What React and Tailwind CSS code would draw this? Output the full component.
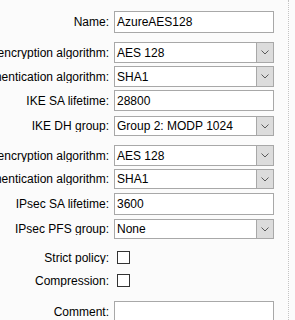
import React from "react";

const font = { fontFamily: '"Liberation Sans", Arial, sans-serif' };

function Label({ children }) {
  return (
    <div className="w-[110px] flex justify-end overflow-hidden pr-[1px]">
      <span className="shrink-0 whitespace-nowrap text-[12px] text-black leading-none">{children}</span>
    </div>
  );
}

function Input({ value, h = "h-[22px]" }) {
  return (
    <div className={`w-[160px] ${h} bg-white border border-[#a8a8a8] flex items-center pl-[2px] text-[12px] text-black`}>
      {value}
    </div>
  );
}

function Select({ value, h = "h-[21px]" }) {
  return (
    <div className={`w-[160px] ${h} bg-white border border-[#a8a8a8] flex items-stretch text-[12px] text-black`}>
      <div className="flex-1 flex items-center pl-[2px]">{value}</div>
      <div className="w-[17px] bg-[#dcdcdc] border-l border-[#a8a8a8] flex items-center justify-center">
        <svg width="8" height="5" viewBox="0 0 8 5">
          <path d="M0.5 0.5 L4 4 L7.5 0.5" fill="none" stroke="#5a5a5a" strokeWidth="1" />
        </svg>
      </div>
    </div>
  );
}

function Row({ label, children, mt }) {
  return (
    <div className={`flex items-center gap-x-[4px] ${mt}`}>
      <Label>{label}</Label>
      {children}
    </div>
  );
}

function Sep({ mt }) {
  return <div className={`w-[280px] h-px bg-[#a0a0a0] ${mt}`} />;
}

function Check({ label, mt }) {
  return (
    <div className={`flex items-center gap-x-[7px] ${mt}`}>
      <Label>{label}</Label>
      <div className="w-[13px] h-[13px] bg-white border border-[#333333]" />
    </div>
  );
}

export default function App() {
  return (
    <div className="w-[295px] h-[320px] overflow-hidden bg-[#fbfbfb] flex" style={font}>
      <div className="w-[288px] shrink-0 flex flex-col">
        <div className="h-[2px] w-full bg-[#f28c00]" />
        <Row label="Name:" mt="mt-[11px]">
          <Input value="AzureAES128" />
        </Row>
        <Sep mt="mt-[4px]" />
        <Row label="IKE encryption algorithm:" mt="mt-[5px]">
          <Select value="AES 128" />
        </Row>
        <Row label="IKE authentication algorithm:" mt="mt-[3px]">
          <Select value="SHA1" />
        </Row>
        <Row label="IKE SA lifetime:" mt="mt-[3px]">
          <Input value="28800" h="h-[21px]" />
        </Row>
        <Row label="IKE DH group:" mt="mt-[5px]">
          <Select value="Group 2: MODP 1024" h="h-[20px]" />
        </Row>
        <Sep mt="mt-[4px]" />
        <Row label="IPsec encryption algorithm:" mt="mt-[5px]">
          <Select value="AES 128" />
        </Row>
        <Row label="IPsec authentication algorithm:" mt="mt-[3px]">
          <Select value="SHA1" h="h-[20px]" />
        </Row>
        <Row label="IPsec SA lifetime:" mt="mt-[4px]">
          <Input value="3600" />
        </Row>
        <Row label="IPsec PFS group:" mt="mt-[4px]">
          <Select value="None" h="h-[20px]" />
        </Row>
        <Sep mt="mt-[4px]" />
        <Check label="Strict policy:" mt="mt-[8px]" />
        <Check label="Compression:" mt="mt-[10px]" />
        <Sep mt="mt-[8px]" />
        <Row label="Comment:" mt="mt-[6px]">
          <Input value="" />
        </Row>
      </div>
      <div className="flex-1 border-l border-dotted border-[#c4c4c4] bg-[#fbfbfb]" />
    </div>
  );
}
